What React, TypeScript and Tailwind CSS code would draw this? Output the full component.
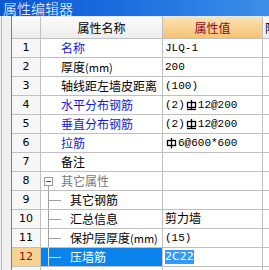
import React from "react";

const cjk = { fontFamily: '"Noto Sans CJK SC", "Liberation Sans", sans-serif' };

function Bar({ bar }: { bar?: boolean }) {
  return (
    <svg width="11" height="12" viewBox="0 0 11 12" className="inline-block align-middle mx-[1px]">
      <rect x="1.5" y="3.5" width="8" height="5" fill="none" stroke="currentColor" strokeWidth="1.3" />
      <line x1="5.5" y1="1" x2="5.5" y2={bar ? 10 : 11.5} stroke="currentColor" strokeWidth="1.3" />
      {bar && <line x1="1" y1="10.5" x2="10" y2="10.5" stroke="currentColor" strokeWidth="1.3" />}
    </svg>
  );
}

type Row = {
  n: string;
  name: React.ReactNode;
  value?: React.ReactNode;
  color?: string;
  level?: number;
  group?: boolean;
  selected?: boolean;
};

const rows: Row[] = [
  { n: "1", name: "名称", value: "JLQ-1", color: "text-[#1a1ac4]" },
  { n: "2", name: <span>厚度<span className="text-[11px]">(mm)</span></span>, value: "200" },
  { n: "3", name: "轴线距左墙皮距离", value: "(100)" },
  { n: "4", name: "水平分布钢筋", value: <span>(2)<Bar bar />12@200</span>, color: "text-[#1a1ac4]" },
  { n: "5", name: "垂直分布钢筋", value: <span>(2)<Bar bar />12@200</span>, color: "text-[#1a1ac4]" },
  { n: "6", name: "拉筋", value: <span><Bar />6@600*600</span>, color: "text-[#1a1ac4]" },
  { n: "7", name: "备注", value: "" },
  { n: "8", name: "其它属性", group: true },
  { n: "9", name: "其它钢筋", level: 1 },
  { n: "10", name: "汇总信息", value: "剪力墙", level: 1 },
  { n: "11", name: <span>保护层厚度<span className="text-[11px]">(mm)</span></span>, value: "(15)", level: 1 },
  { n: "12", name: "压墙筋", value: "2C22", level: 1, selected: true },
];

export default function App() {
  return (
    <div className="w-[269px] h-[270px] overflow-hidden bg-[#f0f0f0] flex flex-col" style={cjk}>
      <div className="h-[16px] shrink-0 bg-gradient-to-r from-[#0a58d0] via-[#1f6fe0] to-[#3d8fe8] text-white text-[14px] leading-[16px] pl-[3px] font-light">
        属性编辑器
      </div>
      <div className="flex flex-1 min-h-0">
        <div className="w-[11px] shrink-0 border-l border-[#b8b8b8] ml-[1px] border-r border-r-[#808080]" />
        <div className="flex-1 bg-white border-t border-[#e8e8e8] overflow-hidden">
          <div className="grid grid-cols-[29px_122px_100px_1fr]">
            <div className="h-[22px] bg-gradient-to-b from-[#fbfbfb] to-[#ececec] border-r border-b border-[#c0c0c0]" />
            <div className="h-[22px] bg-gradient-to-b from-[#fbfbfb] to-[#ececec] border-r border-b border-[#c0c0c0] flex items-center justify-center text-[12px] text-black">
              属性名称
            </div>
            <div className="h-[22px] bg-gradient-to-b from-[#fbe3b4] to-[#f5c272] border-r border-b border-[#c0c0c0] flex items-center justify-center text-[12px] text-[#8a0a1e]">
              属性值
            </div>
            <div className="h-[22px] bg-gradient-to-b from-[#fbfbfb] to-[#ececec] border-b border-[#c0c0c0] text-[12px] flex items-center pl-[2px] overflow-hidden whitespace-nowrap">
              隐
            </div>
            {rows.map((r) => (
              <React.Fragment key={r.n}>
                <div
                  className={`h-[19px] border-r border-b border-[#c0c0c0] flex items-center justify-center text-[12px] ${
                    r.selected ? "bg-[#f8d390] text-[#8a0a1e]" : "bg-[#f7f7f7] text-black"
                  }`}
                  style={{ fontFamily: '"DejaVu Sans", sans-serif', fontSize: 11 }}
                >
                  {r.n}
                </div>
                <div
                  className={`h-[19px] border-r border-b border-[#c0c0c0] relative flex items-center text-[12px] whitespace-nowrap overflow-hidden ${
                    r.selected ? "bg-[#0a84ea] text-white" : r.group ? "text-[#7a7a7a]" : r.color ?? "text-black"
                  }`}
                >
                  {r.group && (
                    <>
                      <div className="absolute left-[3px] top-[5px] w-[9px] h-[9px] border border-[#9a9a9a] bg-white flex items-center justify-center">
                        <div className="w-[5px] h-[1px] bg-[#555]" />
                      </div>
                      <div className="absolute left-[7px] top-[14px] w-[1px] h-[6px] bg-[#a0a0a0]" />
                    </>
                  )}
                  {r.level === 1 && (
                    <>
                      <div className={`absolute left-[7px] top-0 w-[1px] h-[19px] ${r.selected ? "bg-[#cfe4fb]" : "bg-[#a0a0a0]"}`} />
                      <div className={`absolute left-[8px] top-[9px] w-[12px] h-[1px] ${r.selected ? "bg-[#cfe4fb]" : "bg-[#a0a0a0]"}`} />
                    </>
                  )}
                  <span className={r.level === 1 ? "pl-[29px]" : "pl-[20px]"}>{r.name}</span>
                </div>
                <div className="h-[19px] border-r border-b border-[#c0c0c0] flex items-center pl-[2px] text-[12px] text-black whitespace-nowrap overflow-hidden">
                  {r.selected ? (
                    <span className="bg-[#3399ff] text-white leading-[14px]" style={{ fontFamily: '"DejaVu Sans", sans-serif', fontSize: 11 }}>
                      {r.value}
                    </span>
                  ) : (
                    <span style={{ fontFamily: '"Liberation Mono", "Noto Sans CJK SC", monospace', fontSize: 11 }}>
                      {typeof r.value === "string" && /[\u4e00-\u9fff]/.test(r.value) ? (
                        <span style={{ ...cjk, fontSize: 12 }}>{r.value}</span>
                      ) : (
                        r.value
                      )}
                    </span>
                  )}
                </div>
                <div className="h-[19px] border-b border-[#c0c0c0]" />
              </React.Fragment>
            ))}
            <div className="h-[19px] border-r border-[#c0c0c0] bg-[#f7f7f7]" />
            <div className="h-[19px] border-r border-[#c0c0c0]" />
            <div className="h-[19px] border-r border-[#c0c0c0]" />
            <div className="h-[19px]" />
          </div>
        </div>
      </div>
    </div>
  );
}
